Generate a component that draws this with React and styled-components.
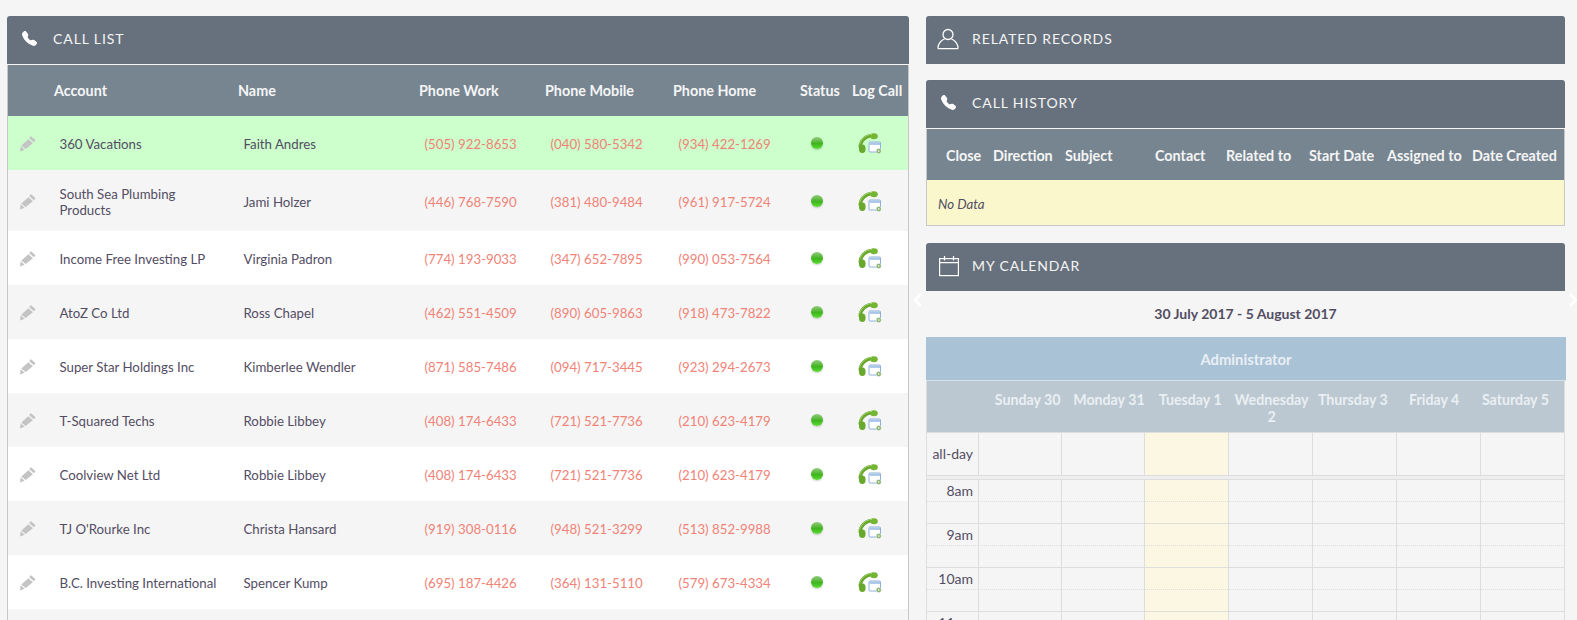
import React from 'react';
import styled, { createGlobalStyle } from 'styled-components';
import { BsTelephoneFill } from 'react-icons/bs';

const Global = createGlobalStyle`
  html, body { margin: 0; padding: 0; height: 620px; overflow: hidden; background: #f5f5f5; }
  body { font-family: Lato, "Open Sans", sans-serif; font-size: 14px; color: #534d64; }
  * { box-sizing: border-box; }
`;

const Page = styled.div`
  display: grid;
  grid-template-columns: 902px 640px;
  column-gap: 17px;
  padding: 16px 0 0 7px;
  align-items: start;
`;
const Column = styled.div`
  display: flex;
  flex-direction: column;
`;
const PanelHeader = styled.div`
  height: 48px;
  background: #67717d;
  border-radius: 3px 3px 0 0;
  display: flex;
  align-items: center;
  padding-bottom: 3px;
  color: #f5f5f5;
  font-size: 14px;
  letter-spacing: 0.9px;
  width: ${p => (p.$narrow ? '639px' : '100%')};
`;
const IconSlot = styled.span`
  width: 46px;
  padding-left: ${p => p.$pad || 14}px;
  display: flex;
  align-items: center;
  flex: none;
  color: #fff;
`;
const Panel = styled.section`
  margin-bottom: ${p => p.$gap || 0}px;
  position: relative;
`;
const TableFrame = styled.div`
  margin-top: 1px;
  border-left: 1px solid #c8c8c8;
  border-right: 1px solid #c8c8c8;
  border-bottom: ${p => (p.$closed ? '1px solid #c8c8c8' : 'none')};
  width: ${p => (p.$narrow ? '639px' : '902px')};
`;
const Table = styled.table`
  border-collapse: collapse;
  table-layout: fixed;
  width: 100%;
`;
const Col = styled.col`
  width: ${p => p.$w}px;
`;
const HeadRow = styled.tr`
  height: 51px;
  background: #778591;
`;
const Th = styled.th`
  padding: ${p => p.$top || 0}px 0 0 ${p => p.$pad || 0}px;
  text-align: left;
  font-weight: 700;
  font-size: 14.35px;
  color: #f5f5f5;
  white-space: nowrap;
`;
const Row = styled.tr`
  height: ${p => p.$h}px;
  background: ${p => p.$bg};
`;
const Td = styled.td`
  padding: ${p => p.$top ?? 1}px 5px 0 5.5px;
  font-size: 13.25px;
  line-height: 16px;
  color: #534d64;
`;
const PhoneCell = styled(Td)`
  color: #f08377;
`;
const PencilCell = styled.td`
  padding: 0 0 0 11px;
`;
const Cell = styled.td`
  padding: 0 0 0 ${p => p.$pad}px;
`;
const Dot = styled.span`
  display: block;
  width: 12px;
  height: 12px;
  border-radius: 50%;
  background: linear-gradient(180deg, #8fcc78 0%, #62bb45 35%, #3db51c 55%, #5cdc34 100%);
  box-shadow: 0 1px 2px rgba(0, 0, 0, 0.2);
`;
const NoData = styled.td`
  height: 45px;
  background: #fbf7cd;
  padding: 2px 0 0 11px;
  font-style: italic;
  font-size: 13.25px;
  color: #534d64;
`;
const DateLine = styled.div`
  height: 46px;
  display: flex;
  align-items: center;
  justify-content: center;
  padding-bottom: 2px;
  font-weight: 700;
  font-size: 14px;
  color: #534d64;
  width: 639px;
`;
const Owner = styled.div`
  height: 44px;
  background: #aac2d6;
  color: #e9eff4;
  font-weight: 700;
  font-size: 14.8px;
  display: flex;
  align-items: center;
  justify-content: center;
  border-bottom: 1px solid #d5e1ea;
`;
const HeadGrid = styled.div`
  display: grid;
  grid-template-columns: 60px repeat(7, 81.3px) 1fr;
  width: 639px;
  height: 52px;
  background: #bcc8d1;
  border-left: 1px solid #ddd;
  border-right: 1px solid #ddd;
  border-bottom: 1px solid #ddd;
`;
const DayHead = styled.div`
  color: #e9eff3;
  font-weight: 700;
  font-size: 14.2px;
  line-height: 17px;
  padding: 10px 2px 0;
  text-align: center;
`;
const CalGrid = styled.div`
  display: grid;
  grid-template-columns: 51px 83px 83px 84px 84px 84px 84px 84px;
  width: 639px;
  border-left: 1px solid #ddd;
  border-right: 1px solid #ddd;
`;
const AxisCell = styled.div`
  height: ${p => p.$h}px;
  text-align: right;
  padding: ${p => p.$top}px 5px 0 0;
  font-size: 14px;
  line-height: 17px;
  color: #534d64;
  border-bottom: 1px ${p => p.$line || 'solid'} #ddd;
  white-space: nowrap;
`;
const DayCell = styled.div`
  height: ${p => p.$h}px;
  border-left: 1px solid #ddd;
  border-bottom: 1px ${p => p.$line || 'solid'} #ddd;
  background: ${p => (p.$today ? '#fcf7e3' : 'transparent')};
`;
const Divider = styled.div`
  grid-column: 1 / -1;
  height: 4px;
  background: #eeeeee;
  border-bottom: 1px solid #ddd;
`;
const Chevron = styled.svg`
  position: absolute;
  top: 49px;
  left: ${p => p.$left}px;
  width: 10px;
  height: 16px;
`;
const IconSvg = styled.svg`
  display: block;
  margin-top: ${p => p.$top || 0}px;
`;

const Pencil = () => (
  <IconSvg $top={1} width="18" height="17" viewBox="0 0 18 17" fill="#c4c4c4">
    <path d="M12.2 1.4 15.9 4.6c.5.4.5 1 .1 1.4l-1.2 1.2-4.5-3.900 1-1.800c.3-.3.6-.3.9-.1z" />
    <path d="M9.4 4.3 13.9 8.2 6.6 14 2.3 10.400z" />
    <path d="M1.7 11.2 5.6 14.700 1 16.600z" />
  </IconSvg>
);

const LogCall = () => (
  <IconSvg width="25" height="22" viewBox="0 0 25 22">
    <path d="M17 3.600C9.500 2.500 2.800 9 3.300 15.500" fill="none" stroke="#68a82c" strokeWidth="3.400" />
    <ellipse cx="17" cy="4.200" rx="3.800" ry="3" fill="#75b534" />
    <ellipse cx="5.300" cy="16.800" rx="3.300" ry="4.300" fill="#68a82c" />
    <path d="M15 2.400C9.500 2.500 4.300 6.800 2.600 12.500" fill="none" stroke="#a6d678" strokeWidth=".9" />
    <rect x="12" y="10" width="11.500" height="10" rx="1" fill="#fff" stroke="#8fb0da" />
    <rect x="12.500" y="10.500" width="10.500" height="2.400" fill="#a8c6ea" />
    <circle cx="21.700" cy="19" r="2.500" fill="#7aa85a" stroke="#fff" strokeWidth=".5" />
    <path d="M20.600 19h2.200M21.700 17.900v2.200" stroke="#fff" strokeWidth=".7" />
  </IconSvg>
);

const UserIcon = () => (
  <svg width="22" height="22" viewBox="0 0 22 22" fill="none" stroke="#fff" strokeWidth="1.300">
    <circle cx="11" cy="6.500" r="5" />
    <path d="M7.500 11C4 12.500 1.500 15.500 1 19.500c-.1.700.3 1.200 1 1.200h18c.7 0 1.100-.5 1-1.200-.5-4-3-7-6.500-8.500" />
  </svg>
);

const CalendarIcon = () => (
  <svg width="22" height="22" viewBox="0 0 22 22" fill="none" stroke="#fff" strokeWidth="1.200">
    <rect x="1.600" y="3.600" width="18.800" height="17" />
    <path d="M1.600 7.600h18.800M6.500 1v4.500M15.500 1v4.500" />
  </svg>
);

const leftCols = [46, 184, 181, 126, 128, 127, 52, 56];
const rows = [
  ['360 Vacations', 'Faith Andres', '(505) 922-8653', '(040) 580-5342', '(934) 422-1269', 54, '#ccffcc'],
  [<>South Sea Plumbing<br />Products</>, 'Jami Holzer', '(446) 768-7590', '(381) 480-9484', '(961) 917-5724', 61, '#f5f5f5'],
  ['Income Free Investing LP', 'Virginia Padron', '(774) 193-9033', '(347) 652-7895', '(990) 053-7564', 54, '#ffffff'],
  ['AtoZ Co Ltd', 'Ross Chapel', '(462) 551-4509', '(890) 605-9863', '(918) 473-7822', 54, '#f5f5f5'],
  ['Super Star Holdings Inc', 'Kimberlee Wendler', '(871) 585-7486', '(094) 717-3445', '(923) 294-2673', 54, '#ffffff'],
  ['T-Squared Techs', 'Robbie Libbey', '(408) 174-6433', '(721) 521-7736', '(210) 623-4179', 54, '#f5f5f5'],
  ['Coolview Net Ltd', 'Robbie Libbey', '(408) 174-6433', '(721) 521-7736', '(210) 623-4179', 54, '#ffffff'],
  ["TJ O'Rourke Inc", 'Christa Hansard', '(919) 308-0116', '(948) 521-3299', '(513) 852-9988', 54, '#f5f5f5'],
  ['B.C. Investing International', 'Spencer Kump', '(695) 187-4426', '(364) 131-5110', '(579) 673-4334', 54, '#ffffff'],
];

const histCols = [66, 72, 90, 71, 83, 78, 85, 92];
const histHeads = ['Close', 'Direction', 'Subject', 'Contact', 'Related to', 'Start Date', 'Assigned to', 'Date Created'];
const days = ['Sunday 30', 'Monday 31', 'Tuesday 1', 'Wednesday 2', 'Thursday 3', 'Friday 4', 'Saturday 5'];
const hours = ['8am', '9am', '10am', '11am'];

function DayCells({ h, line }) {
  return days.map((d, i) => <DayCell key={d} $h={h} $line={line} $today={i === 2} />);
}

export default function App() {
  return (
    <>
      <Global />
      <Page>
        <Column>
          <Panel>
            <PanelHeader>
              <IconSlot $pad={15}><BsTelephoneFill size={15} /></IconSlot>
              CALL LIST
            </PanelHeader>
            <TableFrame>
              <Table>
                <colgroup>{leftCols.map((w, i) => <Col key={i} $w={w} />)}</colgroup>
                <thead>
                  <HeadRow>
                    <Th />
                    <Th>Account</Th>
                    <Th>Name</Th>
                    <Th>Phone Work</Th>
                    <Th>Phone Mobile</Th>
                    <Th>Phone Home</Th>
                    <Th>Status</Th>
                    <Th>Log Call</Th>
                  </HeadRow>
                </thead>
                <tbody>
                  {rows.map((r, i) => {
                    const top = i === 1 ? 2 : 1;
                    return (
                      <Row key={i} $h={r[5]} $bg={r[6]}>
                        <PencilCell><Pencil /></PencilCell>
                        <Td $top={top}>{r[0]}</Td>
                        <Td $top={top}>{r[1]}</Td>
                        <PhoneCell $top={top}>{r[2]}</PhoneCell>
                        <PhoneCell $top={top}>{r[3]}</PhoneCell>
                        <PhoneCell $top={top}>{r[4]}</PhoneCell>
                        <Cell $pad={11}><Dot /></Cell>
                        <Cell $pad={5}><LogCall /></Cell>
                      </Row>
                    );
                  })}
                  <Row $h={54} $bg="#f5f5f5"><td colSpan={8} /></Row>
                </tbody>
              </Table>
            </TableFrame>
          </Panel>
        </Column>
        <Column>
          <Panel $gap={16}>
            <PanelHeader $narrow>
              <IconSlot $pad={11}><UserIcon /></IconSlot>
              RELATED RECORDS
            </PanelHeader>
          </Panel>
          <Panel $gap={17}>
            <PanelHeader $narrow>
              <IconSlot $pad={15}><BsTelephoneFill size={15} /></IconSlot>
              CALL HISTORY
            </PanelHeader>
            <TableFrame $narrow $closed>
              <Table>
                <colgroup>{histCols.map((w, i) => <Col key={i} $w={w} />)}</colgroup>
                <thead>
                  <HeadRow>
                    {histHeads.map((h, i) => <Th key={h} $top={1} $pad={i === 0 ? 19 : 0}>{h}</Th>)}
                  </HeadRow>
                </thead>
                <tbody>
                  <tr><NoData colSpan={8}>No Data</NoData></tr>
                </tbody>
              </Table>
            </TableFrame>
          </Panel>
          <Panel>
            <PanelHeader $narrow>
              <IconSlot $pad={12}><CalendarIcon /></IconSlot>
              MY CALENDAR
            </PanelHeader>
            <Chevron $left={-13} viewBox="0 0 10 16" fill="none" stroke="#fff" strokeWidth="2.500"><path d="M8 2 2 8l6 6" /></Chevron>
            <Chevron $left={642} viewBox="0 0 10 16" fill="none" stroke="#fff" strokeWidth="2.500"><path d="m2 2 6 6-6 6" /></Chevron>
            <DateLine>30 July 2017 - 5 August 2017</DateLine>
            <Owner>Administrator</Owner>
            <HeadGrid>
              <span />
              {days.map(d => <DayHead key={d}>{d}</DayHead>)}
            </HeadGrid>
            <CalGrid>
              <AxisCell $h={43} $top={12}>all-day</AxisCell>
              <DayCells h={43} />
              <Divider />
              {hours.map(h => (
                <React.Fragment key={h}>
                  <AxisCell $h={22} $top={2} $line="dotted">{h}</AxisCell>
                  <DayCells h={22} line="dotted" />
                  <AxisCell $h={22} $top={0} />
                  <DayCells h={22} />
                </React.Fragment>
              ))}
            </CalGrid>
          </Panel>
        </Column>
      </Page>
    </>
  );
}
